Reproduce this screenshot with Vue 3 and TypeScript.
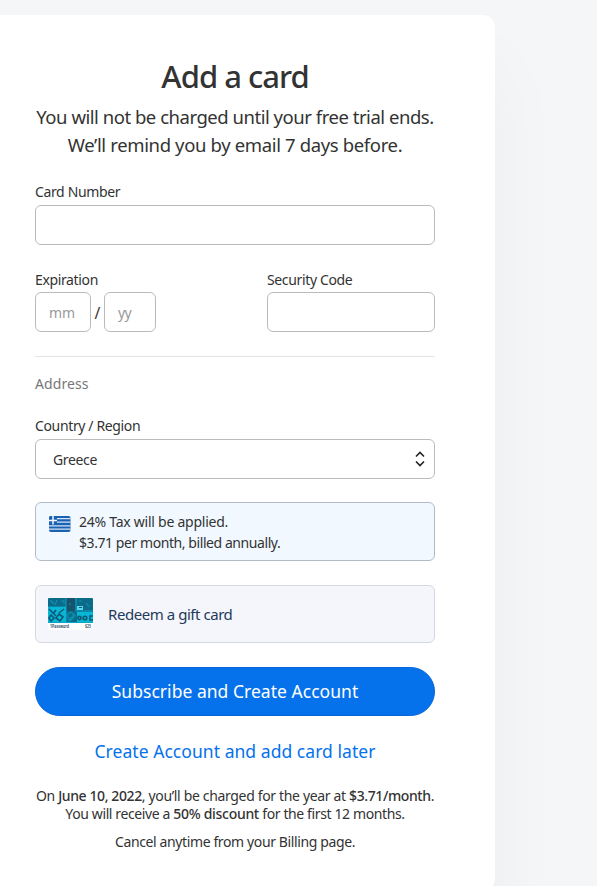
<script setup lang="ts">
import { ref } from 'vue'

const cardNumber = ref('')
const month = ref('')
const year = ref('')
const securityCode = ref('')
const stripes = [2.6, 6.2, 9.8, 13.2]
</script>

<template>
  <main class="page">
    <form class="card" @submit.prevent>
      <h1>Add a card</h1>
      <p class="intro">
        <span class="intro-a">You will not be charged until your free trial ends.</span><br />
        <span class="intro-b">We’ll remind you by email 7 days before.</span>
      </p>

      <label class="label" for="number">Card Number</label>
      <input id="number" v-model="cardNumber" class="field" />

      <div class="row">
        <div class="expiry">
          <label class="label" for="mm">Expiration</label>
          <div class="dates">
            <input id="mm" v-model="month" class="field mm" placeholder="mm" />
            <span class="slash">/</span>
            <input v-model="year" class="field yy" placeholder="yy" />
          </div>
        </div>
        <div class="security">
          <label class="label" for="code">Security Code</label>
          <input id="code" v-model="securityCode" class="field" />
        </div>
      </div>

      <hr />
      <h2>Address</h2>
      <span class="label">Country / Region</span>
      <div class="field select">
        <span>Greece</span>
        <svg width="10" height="16" viewBox="0 0 10 16" fill="none" stroke="#222" stroke-width="1.6">
          <path d="M1 5.5 5 1.5l4 4M1 10.5l4 4 4-4" />
        </svg>
      </div>

      <div class="tax">
        <svg class="flag" width="22" height="16" viewBox="0 0 22 16">
          <defs><clipPath id="flag-clip"><rect width="21.5" height="16" rx="2" /></clipPath></defs>
          <g clip-path="url(#flag-clip)">
            <rect width="22" height="16" fill="#1b62b3" />
            <path v-for="y in stripes" :key="y" :d="`M0 ${y}H22`" stroke="#d3e5f6" stroke-width="1.2" />
            <rect width="8" height="8.6" fill="#1b62b3" />
            <path d="M4 0v8.6M0 4.4h8" stroke="#f3f8ff" stroke-width="1.5" />
          </g>
        </svg>
        <p>
          <span class="tax-a">24% Tax will be applied.</span><br />
          <span class="tax-b">$3.71 per month, billed annually.</span>
        </p>
      </div>

      <div class="gift">
        <svg width="45" height="32" viewBox="0 0 45 32">
          <rect width="45" height="32" rx="1" fill="#fff" />
          <path d="M0 1q0-1 1-1h43q1 0 1 1v24H0z" fill="#0b6b89" />
          <path d="M0 9h18v15H0zM29 14h16v10H29z" fill="#08b6d6" />
          <path d="M18 0h9v13h-9z" fill="#17536b" />
          <path d="M28 13h17M18 0v25M28 0v13M0 9h18M0 24.5h45" stroke="#0bb4d4" stroke-width=".8" />
          <g fill="none" stroke="#0a5876" stroke-width="1.6">
            <path d="m1 11 7 7M8 12l-3 4M11 15l5-4" />
            <path d="m11 16 4 3-3 4-4-3z" />
            <path d="m3 17 3 3-3 3-2-3z" />
            <circle cx="31.5" cy="20" r="1.6" /><circle cx="37" cy="20" r="1.8" /><path d="M45 18h-3v4h3" />
          </g>
          <g fill="none" stroke="#0c93b3" stroke-width="1.1">
            <path d="m2 2 4 4M9 2l-2 5M13 3h3v3M19 17l4-3 4 4-5 5zM20 23l7-7M31 3h3M38 5l3 4M22 5v2" />
          </g>
          <path d="M29 8h6v4h-6z" fill="#55d8ed" />
          <path d="M31 9h3v1h-3z" fill="#17536b" />
          <text x="2" y="30" class="mini" textLength="19" lengthAdjust="spacingAndGlyphs">1Password</text>
          <text x="37" y="30" class="mini" textLength="6" lengthAdjust="spacingAndGlyphs">$25</text>
        </svg>
        <span>Redeem a gift card</span>
      </div>

      <button class="subscribe" type="submit">Subscribe and Create Account</button>
      <a class="later">Create Account and add card later</a>

      <p class="terms">
        <span class="terms-a">On <b>June 10, 2022</b>, you’ll be charged for the year at <b>$3.71/month</b>.</span><br />
        <span class="terms-b">You will receive a <b>50% discount</b> for the first 12 months.</span>
      </p>
      <p class="terms cancel">Cancel anytime from your Billing page.</p>
    </form>
  </main>
</template>

<style>
body {
  background: #f5f6f8;
  overflow: hidden;
}
</style>

<style scoped>
.page {
  height: 886px;
  padding-top: 15px;
  box-sizing: border-box;
  overflow: hidden;
  background: #f5f6f8;
  font-family: 'Noto Sans', 'Open Sans', sans-serif;
  font-size: 14px;
  color: #333;
}
.card {
  box-sizing: border-box;
  width: 520px;
  height: 876px;
  margin-left: -25px;
  padding: 39px 60px 0;
  background: #fff;
  border-radius: 12px;
  box-shadow: 0 50px 80px rgba(0, 0, 0, 0.04);
}
h1 {
  margin: 0;
  font-size: 31px;
  font-weight: 500;
  line-height: 44px;
  letter-spacing: -1px;
  text-align: center;
  white-space: nowrap;
}
.intro {
  margin: 5px -20px 23px;
  font-size: 18.5px;
  line-height: 28px;
  text-align: center;
  white-space: nowrap;
}
.intro-a {
  letter-spacing: -0.47px;
}
.intro-b {
  letter-spacing: -0.36px;
}
.label {
  display: block;
  height: 23px;
  line-height: 20px;
  letter-spacing: -0.36px;
  white-space: nowrap;
}
.field {
  display: block;
  box-sizing: border-box;
  width: 100%;
  height: 40px;
  padding: 0 13px;
  border: 1px solid #bbb;
  border-radius: 6px;
  background: #fff;
  font: inherit;
  color: inherit;
  outline: none;
}
.field::placeholder {
  color: #999;
  opacity: 1;
}
.row {
  display: flex;
  justify-content: space-between;
  margin-top: 25px;
}
.row .label {
  height: 22px;
}
.security {
  width: 168px;
}
.dates {
  display: flex;
  align-items: center;
}
.mm {
  width: 56px;
}
.yy {
  width: 52px;
  letter-spacing: -0.6px;
}
.slash {
  width: 13px;
  padding-top: 2px;
  text-align: center;
  font-size: 15.5px;
}
hr {
  height: 1px;
  margin: 24px 0 17px;
  border: 0;
  background: #e3e3e3;
}
h2 {
  margin: 0 0 22px;
  font-size: 14px;
  font-weight: 400;
  line-height: 20px;
  letter-spacing: 0.1px;
  color: #777;
}
.select {
  display: flex;
  align-items: center;
  justify-content: space-between;
  padding: 0 9px 0 17px;
  letter-spacing: -0.35px;
}
.tax {
  box-sizing: border-box;
  display: flex;
  height: 59px;
  margin-top: 23px;
  padding: 8px 13px;
  border: 1px solid #b3bcc5;
  border-radius: 6px;
  background: #f1f8ff;
  line-height: 21px;
  white-space: nowrap;
}
.tax p {
  margin: 0 0 0 8px;
}
.tax-a {
  letter-spacing: -0.25px;
}
.tax-b {
  letter-spacing: -0.43px;
}
.flag {
  margin-top: 5px;
  flex: none;
}
.gift {
  box-sizing: border-box;
  display: flex;
  align-items: center;
  height: 58px;
  margin-top: 24px;
  padding: 0 12px;
  border: 1px solid #d6d9e2;
  border-radius: 6px;
  background: #f5f6fb;
  color: #1f3a5c;
  font-size: 15px;
  letter-spacing: -0.45px;
}
.gift > span {
  margin-left: 15px;
}
.mini {
  font-family: 'Noto Sans', sans-serif;
  font-size: 4.5px;
  font-weight: 600;
  letter-spacing: 0;
  fill: #17405c;
}
.subscribe {
  display: block;
  width: 100%;
  height: 49px;
  margin-top: 24px;
  padding: 0;
  border: 1px solid #0763d8;
  border-radius: 25px;
  background: #0572ec;
  color: #fff;
  font: 17.5px/47px 'Noto Sans', sans-serif;
  letter-spacing: 0.03px;
}
.later {
  display: block;
  margin-top: 21px;
  font-size: 17.5px;
  line-height: 28px;
  letter-spacing: 0.05px;
  text-align: center;
  color: #0572ec;
}
.terms {
  margin: 22px -20px 0;
  line-height: 18px;
  text-align: center;
  white-space: nowrap;
}
.terms b {
  font-weight: 500;
}
.terms-a {
  letter-spacing: -0.34px;
}
.terms-a b {
  letter-spacing: -0.4px;
}
.terms-b {
  letter-spacing: -0.38px;
}
.terms-b b {
  letter-spacing: -0.3px;
}
.cancel {
  margin-top: 10px;
  letter-spacing: -0.38px;
}
</style>
